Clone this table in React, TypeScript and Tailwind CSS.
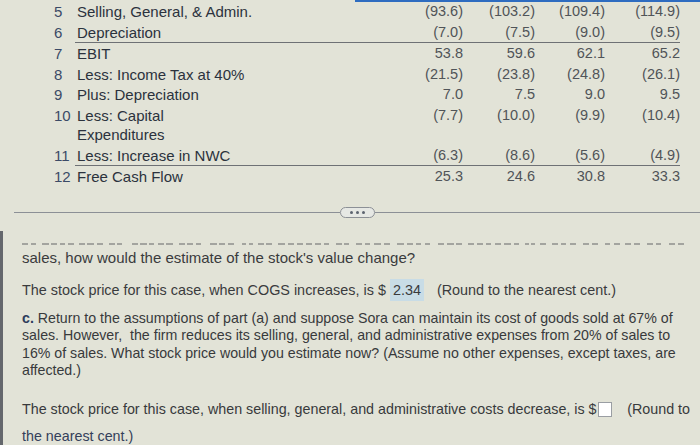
import React from "react";

type Row = {
  n: string;
  label: React.ReactNode;
  vals: string[];
  tall?: boolean;
  lineAfter?: boolean;
};

const rows: Row[] = [
  { n: "5", label: "Selling, General, & Admin.", vals: ["(93.6)", "(103.2)", "(109.4)", "(114.9)"] },
  { n: "6", label: "Depreciation", vals: ["(7.0)", "(7.5)", "(9.0)", "(9.5)"], lineAfter: true },
  { n: "7", label: "EBIT", vals: ["53.8", "59.6", "62.1", "65.2"] },
  { n: "8", label: "Less: Income Tax at 40%", vals: ["(21.5)", "(23.8)", "(24.8)", "(26.1)"] },
  { n: "9", label: "Plus: Depreciation", vals: ["7.0", "7.5", "9.0", "9.5"] },
  {
    n: "10",
    label: (
      <>
        Less: Capital
        <br />
        Expenditures
      </>
    ),
    vals: ["(7.7)", "(10.0)", "(9.9)", "(10.4)"],
    tall: true,
  },
  { n: "11", label: "Less: Increase in NWC", vals: ["(6.3)", "(8.6)", "(5.6)", "(4.9)"], lineAfter: true },
  { n: "12", label: "Free Cash Flow", vals: ["25.3", "24.6", "30.8", "33.3"] },
];

// bottoms of a scrolled-off line of text, seen as short strokes
const strokes: [number, number][] = [
  [0, 6], [9, 5], [20, 7], [29, 6], [38, 5], [46, 6], [57, 6], [65, 7], [75, 6], [87, 6], [95, 5],
  [110, 6], [118, 7], [127, 5], [136, 6], [144, 7], [157, 6], [165, 6], [174, 5], [188, 7], [197, 6],
  [206, 6], [220, 4], [227, 4], [236, 6], [244, 6], [256, 7], [266, 6], [275, 6], [284, 6], [293, 6],
  [302, 5], [314, 6], [322, 5], [334, 6], [343, 5], [352, 7], [362, 6], [375, 7], [385, 6], [394, 5],
  [403, 5], [416, 6], [425, 7], [434, 6], [446, 6], [455, 6], [464, 5], [473, 6], [482, 7], [492, 5],
  [503, 4], [509, 4], [518, 6], [530, 6], [539, 5], [548, 6], [561, 6], [570, 6], [583, 5], [592, 6],
  [603, 6], [612, 6], [625, 6], [634, 5], [647, 6], [656, 6],
];

const TableRow = ({ row }: { row: Row }) => (
  <>
    <div
      className={`grid grid-cols-[23px_316px_70px_72px_70px_75px] items-start ${
        row.tall ? "h-[40px]" : "h-[20.5px]"
      } leading-[21px]`}
    >
      <div className="text-[15px] text-[#3b4a66]">{row.n}</div>
      <div className={`text-[15px] text-[#2b323d] ${row.tall ? "leading-[19px] pt-px" : ""}`}>
        {row.label}
      </div>
      {row.vals.map((v, i) => (
        <div key={i} className="text-right text-[14.5px] text-[#505458]">
          {v}
        </div>
      ))}
    </div>
    {row.lineAfter && <div className="ml-[21px] w-[605px] h-px bg-[#6e7175]" />}
  </>
);

export default function App() {
  return (
    <div className="w-[700px] h-[445px] overflow-hidden bg-[#e2e3d7] font-['Liberation_Sans',Arial,sans-serif] text-[#3a3a3a]">
      {/* top blue edge */}
      <div className="flex h-[2px]">
        <div className="w-[355px]" />
        <div className="flex-1 bg-[#2e6cc0]" />
      </div>

      {/* cash flow table */}
      <div className="pl-[54px] -mt-px">
        {rows.map((r) => (
          <TableRow key={r.n} row={r} />
        ))}
      </div>

      {/* divider with more button */}
      <div className="flex items-center pl-[14px] mt-[20px] h-[12px]">
        <div className="flex-1 h-px bg-[#8c9096]" />
        <div className="w-[35px] h-[11px] rounded-full border border-[#8c9096] flex items-center justify-center gap-[3px] bg-[#e6e8e4]">
          <span className="w-[3px] h-[3px] rounded-full bg-[#5d6470]" />
          <span className="w-[3px] h-[3px] rounded-full bg-[#5d6470]" />
          <span className="w-[3px] h-[3px] rounded-full bg-[#5d6470]" />
        </div>
        <div className="flex-1 h-px bg-[#8c9096]" />
      </div>

      <div className="mt-[12px] pt-[11px] border-l-[3px] border-[#64676c] pl-[19px] pr-[10px] h-[230px]">
        <svg width="670" height="5" className="block">
          {strokes.map(([x, w], i) => (
            <rect key={i} x={x} y={1} width={w} height={2} fill="#a3a49f" />
          ))}
        </svg>

        <p className="text-[15px] leading-[18px] mt-[2px] text-[#3a3b3d]">
          sales, how would the estimate of the stock's value change?
        </p>

        <p className="text-[14.4px] leading-[22px] mt-[12px] text-[#3a3b3d] flex items-center whitespace-nowrap">
          The stock price for this case, when COGS increases, is $&nbsp;
          <span className="bg-[#c8dce6] px-[3px]">2.34</span>
          <span className="ml-[13px]">(Round to the nearest cent.)</span>
        </p>

        <p className="text-[14.2px] leading-[17.6px] mt-[9px] text-[#383a3c]">
          <span className="font-bold text-[#2d3d5c]">c.</span> Return to the assumptions of part (a) and suppose Sora can maintain its cost of goods sold at 67% of
          <br />
          sales. However,&nbsp; the firm reduces its selling, general, and administrative expenses from 20% of sales to
          <br />
          16% of sales. What stock price would you estimate now? (Assume no other expenses, except taxes, are
          <br />
          affected.)
        </p>

        <p className="text-[14.3px] leading-[17px] mt-[21px] text-[#383a3c] flex items-center whitespace-nowrap">
          The stock price for this case, when selling, general, and administrative costs decrease, is $
          <span className="inline-block w-[15px] h-[15px] bg-white border border-[#9a9ea3] ml-[1px]" />
          <span className="ml-[15px]">(Round to</span>
        </p>
        <p className="text-[14.3px] leading-[17px] mt-[10px] text-[#34405a]">the nearest cent.)</p>
      </div>
    </div>
  );
}
